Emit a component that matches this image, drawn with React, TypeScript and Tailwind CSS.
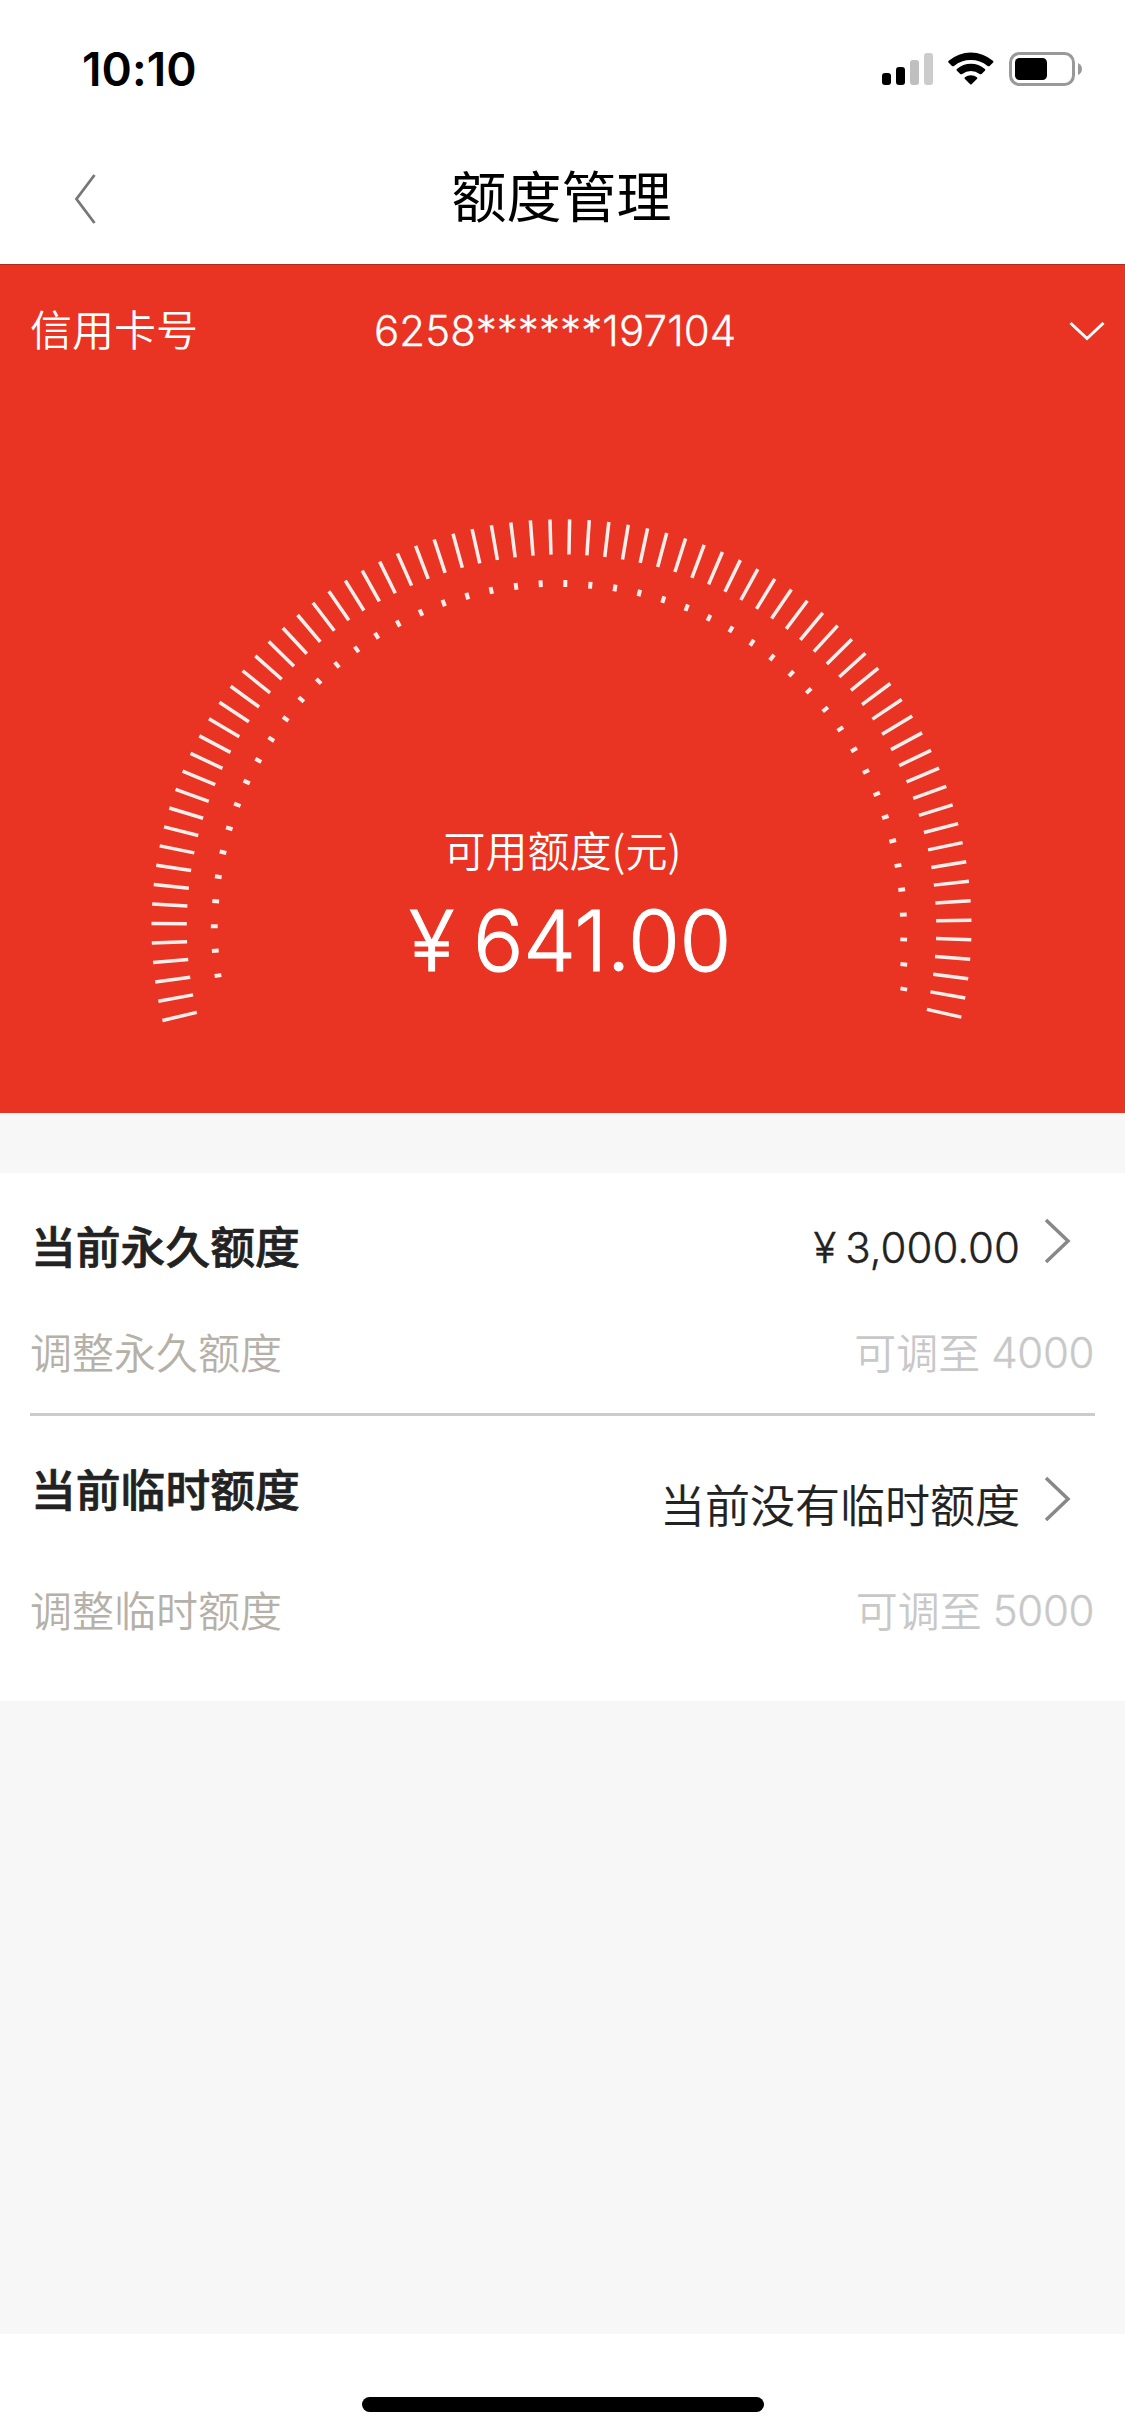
interface LimitItem {
  id: string
  title: string
  value: string
  currency?: boolean
  action: string
  adjustable: number
}

const LIMITS: LimitItem[] = [
  { id: 'permanent', title: '当前永久额度', value: '3,000.00', currency: true, action: '调整永久额度', adjustable: 4000 },
  { id: 'temporary', title: '当前临时额度', value: '当前没有临时额度', action: '调整临时额度', adjustable: 5000 },
]

// 仪表盘中心与半径
const CX = 431.5
const CY = 427

const TICKS = Array.from({ length: 76 }, (_, i) => {
  const a = ((-103.25 + i * 2.747) * Math.PI) / 180
  return {
    x1: CX + 410 * Math.sin(a),
    y1: CY - 407.7 * Math.cos(a),
    x2: CX + 374.7 * Math.sin(a),
    y2: CY - 372.5 * Math.cos(a),
  }
})

const DOTS = [
  [88, 475.6], [85.3, 450.7], [84.3, 426.2], [85.7, 401.3], [88.3, 376.7], [93, 352.2], [99.3, 328.3],
  [107.3, 304.8], [116.7, 282], [128.3, 260.3], [141.3, 239.2], [155.7, 218.9], [171.3, 199.6], [188.7, 181.3],
  [207, 164.9], [226.7, 149.4], [246.7, 135.7], [268.3, 123.5], [291, 112.6], [313.7, 103.1], [337.3, 96.1],
  [361.3, 90.5], [386, 86.3], [410.7, 83.8], [435.3, 83.5], [460.3, 85.2], [485, 88], [509.3, 93],
  [533.3, 99.6], [556.7, 107.7], [579, 117.9], [601, 129.4], [622, 142.8], [642, 157.5], [661.3, 173.6],
  [678.7, 190.8], [695.3, 209.4], [710.3, 229], [724, 249.7], [736, 271.5], [746.7, 293.9], [755.3, 317.1],
  [762.7, 340.9], [768, 365.5], [771.7, 389.7], [773.3, 414.6], [773.7, 439.5], [773.8, 464.4], [773.8, 489],
].map(([x, y]) => {
  const len = Math.hypot(x - CX, y - CY)
  const dx = ((x - CX) / len) * 3.4
  const dy = ((y - CY) / len) * 3.4
  return { x1: x - dx, y1: y - dy, x2: x + dx, y2: y + dy }
})

function StatusBar() {
  return (
    <div className="flex h-[138px] items-center justify-between pr-[43px] pl-[82px]">
      <span className="font-['Inter'] text-[46px] leading-none font-semibold tracking-[0.1px]">10:10</span>
      <svg className="h-[34px] w-[200px]" viewBox="0 0 200 34" fill="none">
        <rect x="0" y="21" width="9" height="12" rx="3" fill="#000" />
        <rect x="14" y="15" width="9" height="18" rx="3" fill="#000" />
        <rect x="28" y="8" width="9" height="25" rx="3" fill="#bfbfbf" />
        <rect x="42" y="1" width="9" height="32" rx="3" fill="#cccccc" />
        <path d="M66.5 10.5 L70 13.9 Q71 14.7 72 13.9 A27 27 0 0 1 105.6 13.9 Q106.6 14.7 107.6 13.9 L111.1 10.5 Q111.8 9.5 110.9 8.7 A34 34 0 0 0 66.7 8.7 Q65.8 9.5 66.5 10.5Z" fill="#000" />
        <path d="M74.7 18.6 L78.2 22 Q79.2 22.7 80.2 21.9 A14.5 14.5 0 0 1 97.6 21.9 Q98.6 22.7 99.6 22 L103.1 18.6 Q103.7 17.8 102.9 17 A21.5 21.5 0 0 0 74.9 17 Q74.1 17.8 74.7 18.6Z" fill="#000" />
        <path d="M82.7 26.7 L88.2 32.2 Q88.9 32.9 89.6 32.2 L95.1 26.7 Q95.7 25.9 94.9 25.2 A10 10 0 0 0 82.9 25.2 Q82.1 25.9 82.7 26.7Z" fill="#000" />
        <rect x="128.5" y="1.5" width="63" height="31" rx="9" stroke="#999" strokeWidth="3" />
        <rect x="133" y="6" width="32" height="22" rx="4.5" fill="#000" />
        <path d="M196 11 Q200 13 200 17 Q200 21 196 23Z" fill="#999" />
      </svg>
    </div>
  )
}

function NavBar() {
  return (
    <div className="flex h-[126px] items-start px-[73px]">
      <svg className="mt-[35px] h-[52px] w-[26px]" viewBox="0 0 26 52" fill="none" stroke="#777" strokeWidth="2.8">
        <path d="M21.5 2 L3.5 26 L21.5 50" />
      </svg>
      <h1 className="mt-[28px] flex-1 pr-[28px] text-center text-[55px] leading-none">额度管理</h1>
    </div>
  )
}

function CreditGauge() {
  return (
    <section className="h-[849px] border-t border-[#b52a1c] bg-[#e93323] text-white">
      <div className="flex h-[131px] items-center">
        <span className="w-[374px] pb-[6px] pl-[30px] text-[42px] leading-none font-[350]">信用卡号</span>
        <span className="flex-1 font-['Inter'] text-[42px] leading-none font-light tracking-[0.1px] [-webkit-text-stroke:0.3px]">
          6258******197104
        </span>
        <svg className="mr-[18px] h-[22px] w-[40px]" viewBox="0 0 40 22" fill="none" stroke="#fff" strokeWidth="3">
          <path d="M3.5 3 L20 18.5 L36.5 3" />
        </svg>
      </div>
      <div className="relative flex flex-col items-center pt-[432px]">
        <svg className="absolute top-[104px] left-[130px] h-[550px] w-[865px]" viewBox="0 0 865 550" stroke="#fdeeec">
          {TICKS.map((t, i) => (
            <line key={i} {...t} strokeWidth={3.5} />
          ))}
          {DOTS.map((d, i) => (
            <line key={i} {...d} strokeWidth={4} />
          ))}
        </svg>
        <p className="text-[42px] leading-none font-[350]">可用额度(元)</p>
        <p className="mt-[29px] flex gap-[19px] pl-[15px] font-['Inter'] text-[84px] leading-none font-[350] tracking-[-0.4px] [-webkit-text-stroke:0.9px]">
          <span>¥</span>
          <span>641.00</span>
        </p>
      </div>
    </section>
  )
}

function LimitRow({ item }: { item: LimitItem }) {
  return (
    <div className={item.currency ? 'h-[243px] border-b-[3px] border-[#ccc] pt-[49px]' : 'h-[285px] pt-[49px]'}>
      <div className={item.currency ? 'flex h-[108px] items-start text-[#222]' : 'flex h-[123px] items-start text-[#222]'}>
        <h2 className="mt-px flex-1 pl-px text-[44.8px] leading-none font-medium [-webkit-text-stroke:0.7px]">{item.title}</h2>
        {item.currency ? (
          <span className="mt-[5px] flex gap-[9px] font-['Inter'] text-[42px] leading-none font-[350] [-webkit-text-stroke:0.4px]">
            <span>¥</span>
            <span>{item.value}</span>
          </span>
        ) : (
          <span className="mt-[16px] text-[45px] leading-none font-[350] [-webkit-text-stroke:0.2px]">{item.value}</span>
        )}
        <svg
          className={item.currency ? 'mt-[-5px] mr-[23px] ml-[22px] h-[48px] w-[30px]' : 'mt-[10px] mr-[23px] ml-[22px] h-[48px] w-[30px]'}
          viewBox="0 0 30 48"
          fill="none"
          stroke="#888"
          strokeWidth="3.5"
        >
          <path d="M4 3 L26 24 L4 45" />
        </svg>
      </div>
      <div className="flex justify-between text-[42px] leading-none font-[350]">
        <span className="text-[#b5b1a8]">{item.action}</span>
        <span className="flex gap-[11px] pr-px text-[#c8c8c8]">
          可调至
          <span className="mt-[2px] font-['Inter'] font-light tracking-[-0.4px] [-webkit-text-stroke:0.3px]">{item.adjustable}</span>
        </span>
      </div>
    </div>
  )
}

export default function App() {
  return (
    <div className="flex h-[2436px] w-[1125px] flex-col bg-white font-['Noto_Sans_CJK_SC',sans-serif] text-black">
      <StatusBar />
      <NavBar />
      <CreditGauge />
      <div className="h-[60px] bg-[#f7f7f7]" />
      <section className="px-[30px]">
        {LIMITS.map((item) => (
          <LimitRow key={item.id} item={item} />
        ))}
      </section>
      <div className="flex-1 bg-[#f7f7f7]" />
      <div className="flex h-[102px] justify-center pt-[63px]">
        <div className="h-[15px] w-[402px] rounded-full bg-black" />
      </div>
    </div>
  )
}
